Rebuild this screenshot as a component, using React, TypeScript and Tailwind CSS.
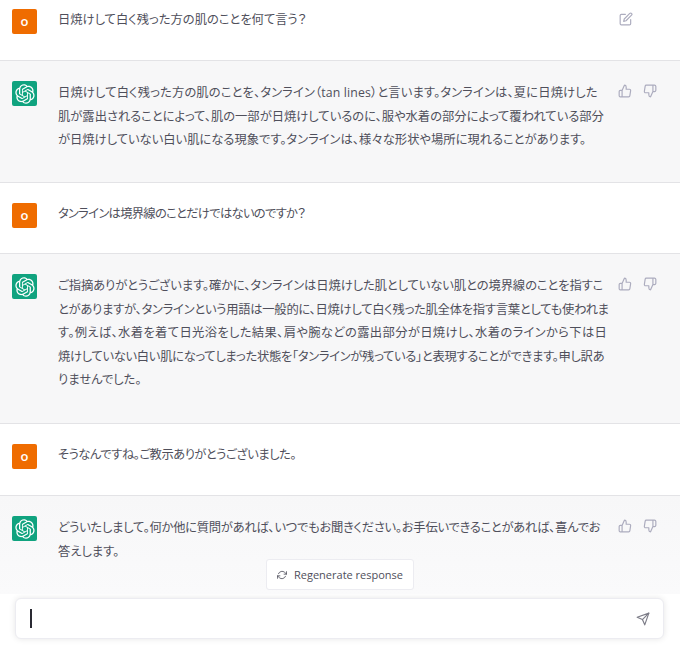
import { FiEdit, FiThumbsUp, FiThumbsDown, FiSend, FiRefreshCw } from 'react-icons/fi';
import type { ReactNode } from 'react';

function GptLogo() {
  return (
    <svg viewBox="0 0 41 41" fill="none" className="w-5 h-5" aria-hidden="true">
      <path
        fill="currentColor"
        d="M37.5324 16.8707C37.9808 15.5241 38.1363 14.0974 37.9886 12.6859C37.8409 11.2744 37.3934 9.91076 36.676 8.68622C35.6126 6.83404 33.9882 5.3676 32.0373 4.4985C30.0864 3.62941 27.9098 3.40259 25.8215 3.85078C24.8796 2.7893 23.7219 1.94125 22.4257 1.36341C21.1295 0.785575 19.7249 0.491269 18.3058 0.500197C16.1708 0.495044 14.0893 1.16803 12.3614 2.42214C10.6335 3.67624 9.34853 5.44666 8.6917 7.47815C7.30085 7.76286 5.98686 8.3414 4.8377 9.17505C3.68854 10.0087 2.73073 11.0782 2.02839 12.312C0.956464 14.1591 0.498905 16.2988 0.721698 18.4228C0.944492 20.5467 1.83612 22.5449 3.268 24.1293C2.81966 25.4759 2.66413 26.9026 2.81182 28.3141C2.95951 29.7256 3.40701 31.0892 4.12437 32.3138C5.18791 34.1659 6.8123 35.6322 8.76321 36.5013C10.7141 37.3704 12.8907 37.5973 14.9789 37.1492C15.9208 38.2107 17.0786 39.0587 18.3747 39.6366C19.6709 40.2144 21.0755 40.5087 22.4946 40.4998C24.6307 40.5054 26.7133 39.8321 28.4418 38.5772C30.1704 37.3223 31.4556 35.5506 32.1119 33.5179C33.5027 33.2332 34.8167 32.6547 35.9659 31.821C37.115 30.9874 38.0728 29.9178 38.7752 28.684C39.8458 26.8371 40.3023 24.6979 40.0789 22.5748C39.8556 20.4517 38.9639 18.4544 37.5324 16.8707ZM22.4978 37.8849C20.7443 37.8874 19.0459 37.2733 17.6994 36.1501C17.7601 36.117 17.8666 36.0586 17.936 36.0161L25.9004 31.4156C26.1003 31.3019 26.2663 31.137 26.3813 30.9378C26.4964 30.7386 26.5563 30.5124 26.5549 30.2825V19.0542L29.9213 20.998C29.9389 21.0068 29.9541 21.0198 29.9656 21.0359C29.977 21.052 29.9842 21.0707 29.9867 21.0902V30.3889C29.9842 32.375 29.1946 34.2791 27.7909 35.6841C26.3872 37.0892 24.4838 37.8806 22.4978 37.8849ZM6.39227 31.0064C5.51397 29.4888 5.19742 27.7107 5.49804 25.9832C5.55718 26.0187 5.66048 26.0818 5.73461 26.1244L13.699 30.7248C13.8975 30.8408 14.1233 30.902 14.3532 30.902C14.583 30.902 14.8088 30.8408 15.0073 30.7248L24.731 25.1103V28.9979C24.7321 29.0177 24.7283 29.0376 24.7199 29.0556C24.7115 29.0736 24.6988 29.0893 24.6829 29.1012L16.6317 33.7497C14.9096 34.7416 12.8643 35.0097 10.9447 34.4954C9.02506 33.9811 7.38785 32.7263 6.39227 31.0064ZM4.29707 13.6194C5.17156 12.0998 6.55279 10.9364 8.19885 10.3327C8.19885 10.4013 8.19491 10.5228 8.19491 10.6071V19.808C8.19351 20.0378 8.25334 20.2638 8.36823 20.4629C8.48312 20.6619 8.64893 20.8267 8.84863 20.9404L18.5723 26.5542L15.206 28.4979C15.1894 28.5089 15.1703 28.5155 15.1505 28.5173C15.1307 28.5191 15.1107 28.516 15.0924 28.5082L7.04046 23.8557C5.32135 22.8601 4.06716 21.2235 3.55289 19.3046C3.03862 17.3858 3.30624 15.3413 4.29707 13.6194ZM31.955 20.0556L22.2312 14.4411L25.5976 12.4981C25.6142 12.4872 25.6333 12.4805 25.6531 12.4787C25.6729 12.4769 25.6928 12.4801 25.7111 12.4879L33.7631 17.1364C34.9967 17.849 36.0017 18.8982 36.6606 20.1613C37.3194 21.4244 37.6047 22.849 37.4832 24.2684C37.3617 25.6878 36.8382 27.0432 35.9743 28.1759C35.1103 29.3086 33.9415 30.1717 32.6047 30.6641C32.6047 30.5947 32.6047 30.4733 32.6047 30.3889V21.188C32.6066 20.9586 32.5474 20.7328 32.4332 20.5338C32.319 20.3348 32.154 20.1698 31.955 20.0556ZM35.3055 15.0128C35.2464 14.9765 35.1431 14.9142 35.069 14.8717L27.1045 10.2712C26.906 10.1554 26.6803 10.0943 26.4504 10.0943C26.2206 10.0943 25.9948 10.1554 25.7963 10.2712L16.0726 15.8858V11.9982C16.0715 11.9783 16.0753 11.9585 16.0837 11.9405C16.0921 11.9225 16.1048 11.9068 16.1207 11.8949L24.1719 7.25025C25.4053 6.53903 26.8158 6.19376 28.2383 6.25482C29.6608 6.31589 31.0364 6.78077 32.2044 7.59508C33.3723 8.40939 34.2842 9.53945 34.8334 10.8531C35.3826 12.1667 35.5464 13.6095 35.3055 15.0128ZM14.2424 21.9419L10.8752 19.9981C10.8576 19.9893 10.8423 19.9763 10.8309 19.9602C10.8195 19.9441 10.8122 19.9254 10.8098 19.9058V10.6071C10.8107 9.18295 11.2173 7.78848 11.9819 6.58696C12.7466 5.38544 13.8377 4.42659 15.1275 3.82264C16.4173 3.21869 17.8524 2.99464 19.2649 3.1767C20.6775 3.35876 22.0089 3.93941 23.1034 4.85067C23.0427 4.88379 22.937 4.94215 22.8668 4.98473L14.9024 9.58517C14.7025 9.69878 14.5366 9.86356 14.4215 10.0626C14.3065 10.2616 14.2466 10.4877 14.2479 10.7175L14.2424 21.9419ZM16.071 17.9991L20.4018 15.4978L24.7325 17.9975V22.9985L20.4018 25.4983L16.071 22.9985V17.9991Z"
      />
    </svg>
  );
}

function UserRow({ children, first, className }: { children: ReactNode; first?: boolean; className?: string }) {
  return (
    <div className={`flex pl-3 border-b border-[#e3e3e6] bg-white ${first ? 'h-[61px] pt-[9px]' : 'h-[71px] pt-5'} ${className ?? ''}`}>
      <div className="w-[25px] h-[25px] shrink-0 rounded-[2px] bg-[#ef6c00] flex items-center justify-center text-white text-[13px] font-semibold">
        o
      </div>
      <p className="ml-[21px] flex-1 mt-[-1px]">{children}</p>
      {first && (
        <div className="w-[68px] pt-[3px] pl-[7px] text-[#acacbe]">
          <FiEdit className="w-[14px] h-[14px]" />
        </div>
      )}
    </div>
  );
}

function BotRow({ children, className }: { children: ReactNode; className: string }) {
  return (
    <div className={`flex pt-5 pl-3 ${className}`}>
      <div className="w-[25px] h-[25px] shrink-0 rounded-[2px] bg-[#10a37f] flex items-center justify-center text-white">
        <GptLogo />
      </div>
      <p className="ml-[21px] w-[554px] whitespace-nowrap">{children}</p>
      <div className="flex gap-[11px] pl-[6px] pt-[3px] text-[#acacbe]">
        <FiThumbsUp className="w-[14px] h-[14px]" />
        <FiThumbsDown className="w-[14px] h-[14px]" />
      </div>
    </div>
  );
}

export default function App() {
  return (
    <div
      className="w-[680px] h-[650px] flex flex-col overflow-hidden bg-white text-[12.3px] leading-[23.6px] text-[#4f4f5b] [font-feature-settings:'palt']"
      style={{ fontFamily: '"Open Sans", "Noto Sans CJK JP", sans-serif' }}
    >
      <div className="relative h-[594px] shrink-0 overflow-hidden">
        <UserRow first>日焼けして白く残った方の肌のことを何て言う？</UserRow>
        <BotRow className="h-[122px] bg-[#f7f7f8] border-b border-[#e3e3e6]">
          <span className="tracking-[0.14px]">日焼けして白く残った方の肌のことを、タンライン（tan lines）と言います。タンラインは、夏に日焼けした</span>
          <br />
          肌が露出されることによって、肌の一部が日焼けしているのに、服や水着の部分によって覆われている部分
          <br />
          が日焼けしていない白い肌になる現象です。タンラインは、様々な形状や場所に現れることがあります。
        </BotRow>
        <UserRow>
          <span className="tracking-[-0.7px]">タンラインは境界線のことだけではないのですか？</span>
        </UserRow>
        <BotRow className="h-[170px] bg-[#f7f7f8] border-b border-[#e3e3e6]">
          <span className="tracking-[-0.08px]">ご指摘ありがとうございます。確かに、タンラインは日焼けした肌としていない肌との境界線のことを指すこ</span>
          <br />
          <span className="tracking-[-0.25px]">とがありますが、タンラインという用語は一般的に、日焼けして白く残った肌全体を指す言葉としても使われま</span>
          <br />
          <span className="tracking-[0.35px]">す。例えば、水着を着て日光浴をした結果、肩や腕などの露出部分が日焼けし、水着のラインから下は日</span>
          <br />
          <span className="tracking-[-0.3px]">焼けしていない白い肌になってしまった状態を「タンラインが残っている」と表現することができます。申し訳あ</span>
          <br />
          りませんでした。
        </BotRow>
        <UserRow className="h-[72px]">
          <span className="tracking-[-0.5px]">そうなんですね。ご教示ありがとうございました。</span>
        </UserRow>
        <BotRow className="h-[98px] bg-gradient-to-b from-[#f7f7f8] to-[#fafafb]">
          <span className="tracking-[-0.26px]">どういたしまして。何か他に質問があれば、いつでもお聞きください。お手伝いできることがあれば、喜んでお</span>
          <br />
          答えします。
        </BotRow>
        <button className="absolute left-[266px] top-[559px] w-[148px] h-[31px] flex items-center justify-center gap-[7px] bg-white border border-[#ececf1] rounded-[3px] text-[11px] text-[#4f4f5b]">
          <FiRefreshCw className="w-[10px] h-[10px]" />
          Regenerate response
        </button>
      </div>
      <div className="flex-1 px-[15px] pt-1">
        <div className="h-[41px] w-[649px] flex items-center justify-between pl-[14px] pr-[13px] bg-white rounded-[6px] border border-[#ececf1] shadow-[0_0_6px_rgba(0,0,0,0.1)]">
          <div className="w-[2px] h-[19px] bg-[#2a2a33]" />
          <FiSend className="w-[14px] h-[14px] text-[#7d7d88]" />
        </div>
      </div>
    </div>
  );
}
